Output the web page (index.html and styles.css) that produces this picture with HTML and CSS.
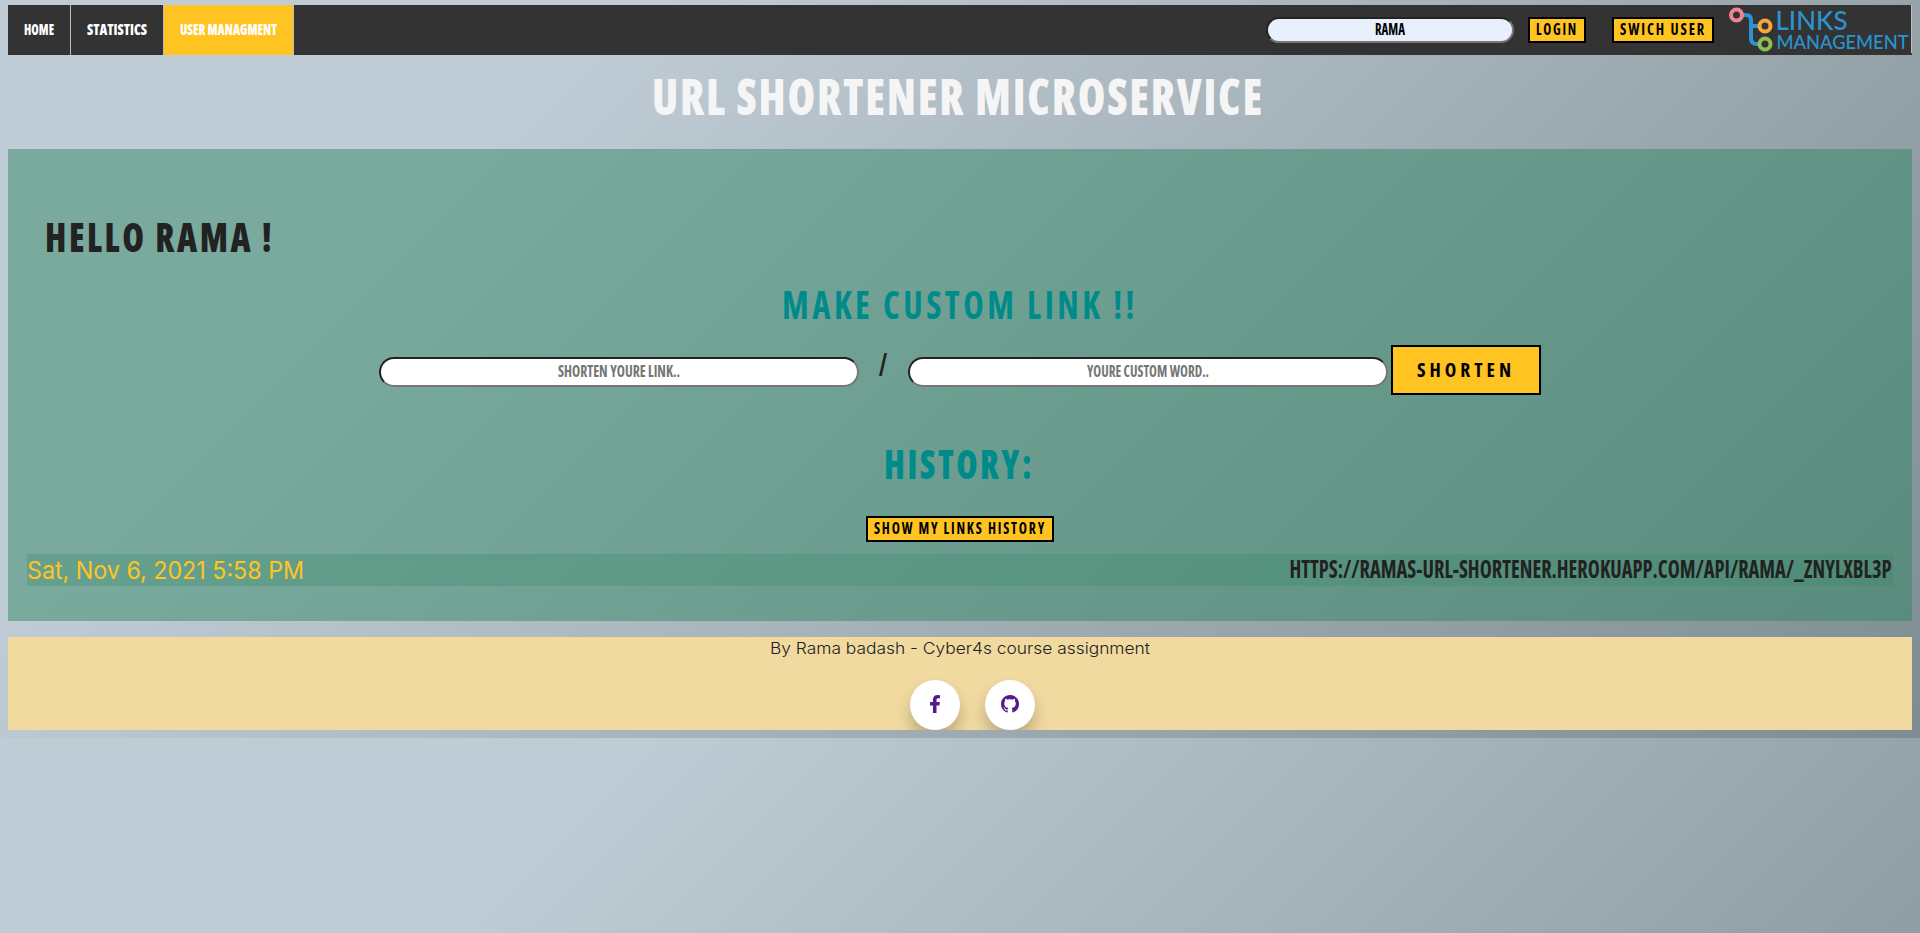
FILE: index.html
```html
<!DOCTYPE html>
<html lang="en">
<head>
<meta charset="utf-8">
<title>URL Shortener Microservice</title>
<link rel="stylesheet" href="styles.css">
</head>
<body>
<nav class="nav">
  <a class="nav-item"><svg class="txt bold" width="30" height="11"><text x="0" y="11" font-size="15.5" textLength="30" lengthAdjust="spacingAndGlyphs">HOME</text></svg></a>
  <a class="nav-item"><svg class="txt bold" width="60" height="11"><text x="0" y="11" font-size="15.5" textLength="60" lengthAdjust="spacingAndGlyphs">STATISTICS</text></svg></a>
  <a class="nav-item active"><svg class="txt bold" width="97" height="11"><text x="0" y="11" font-size="15.5" textLength="97" lengthAdjust="spacingAndGlyphs">USER MANAGMENT</text></svg></a>
  <div class="nav-right">
    <div class="field name"><svg class="txt" width="30" height="11"><text x="0" y="11" font-size="15.5" textLength="30" lengthAdjust="spacingAndGlyphs">RAMA</text></svg></div>
    <button class="btn login"><svg class="txt sp2" width="40" height="11"><text x="-1" y="11" font-size="15.5" textLength="42" lengthAdjust="spacingAndGlyphs">LOGIN</text></svg></button>
    <button class="btn switch"><svg class="txt sp2" width="84" height="11"><text x="-1" y="11" font-size="15.5" textLength="86" lengthAdjust="spacingAndGlyphs">SWICH USER</text></svg></button>
    <svg class="logo" width="183" height="48" viewBox="1728 5 183 48">
      <g fill="none" stroke="#2b93d1" stroke-width="4"><path d="M1743 15h3q5 0 5 5v18q0 6 6 6h2M1751 26h8"/></g>
      <g fill="#333" stroke-width="4"><circle cx="1736.5" cy="15" r="5.5" stroke="#f08590"/><circle cx="1765" cy="26" r="5.5" stroke="#f6a63a"/><circle cx="1765" cy="44" r="5.5" stroke="#8cc152"/></g>
      <text x="1775.5" y="30" font-size="27" textLength="72" lengthAdjust="spacingAndGlyphs">LINKS</text>
      <text x="1776.5" y="48.5" font-size="18.5" textLength="132" lengthAdjust="spacingAndGlyphs">MANAGEMENT</text>
    </svg>
  </div>
</nav>
<h1 class="title"><svg class="txt bold sp2" width="608" height="36"><text x="-2" y="36" font-size="49.8" textLength="612" lengthAdjust="spacingAndGlyphs">URL SHORTENER MICROSERVICE</text></svg></h1>
<main class="panel">
  <h2 class="hello"><svg class="txt bold sp3" width="225" height="29"><text x="-1" y="29.5" font-size="41" textLength="229" lengthAdjust="spacingAndGlyphs">HELLO RAMA !</text></svg></h2>
  <h2 class="make"><svg class="txt sp4" width="350" height="28"><text x="-2" y="28" font-size="39.5" textLength="356" lengthAdjust="spacingAndGlyphs">MAKE CUSTOM LINK !!</text></svg></h2>
  <div class="form">
    <div class="field wide"><svg class="txt" width="122" height="11"><text x="0" y="11" font-size="15.5" textLength="122" lengthAdjust="spacingAndGlyphs">SHORTEN YOURE LINK..</text></svg></div>
    <svg class="txt bold slash" width="8" height="23"><text x="0" y="23" font-size="32" textLength="8" lengthAdjust="spacingAndGlyphs">/</text></svg>
    <div class="field wide"><svg class="txt" width="122" height="11"><text x="0" y="11" font-size="15.5" textLength="122" lengthAdjust="spacingAndGlyphs">YOURE CUSTOM WORD..</text></svg></div>
    <button class="btn shorten"><svg class="txt sp4" width="94" height="14"><text x="-2" y="14" font-size="19.6" textLength="98" lengthAdjust="spacingAndGlyphs">SHORTEN</text></svg></button>
  </div>
  <h2 class="history"><svg class="txt bold sp3" width="145" height="30"><text x="-2" y="29.5" font-size="41" textLength="150" lengthAdjust="spacingAndGlyphs">HISTORY:</text></svg></h2>
  <button class="btn show"><svg class="txt sp2" width="170" height="11"><text x="-1" y="11" font-size="15.5" textLength="172" lengthAdjust="spacingAndGlyphs">SHOW MY LINKS HISTORY</text></svg></button>
  <div class="row">
    <svg class="round date" width="277" height="18"><text x="-1" y="17.5" font-size="24.5" textLength="277" lengthAdjust="spacingAndGlyphs">Sat, Nov 6, 2021 5:58 PM</text></svg>
    <svg class="txt" width="603" height="18"><text x="0.5" y="17" font-size="24" textLength="602" lengthAdjust="spacingAndGlyphs">HTTPS://RAMAS-URL-SHORTENER.HEROKUAPP.COM/API/RAMA/_ZNYLXBL3P</text></svg>
  </div>
</main>
<footer class="footer">
  <svg class="round light" width="379" height="12"><text x="-1" y="12.5" font-size="16" textLength="380" lengthAdjust="spacingAndGlyphs">By Rama badash - Cyber4s course assignment</text></svg>
  <div class="social">
    <a class="disc"><svg width="10" height="18" viewBox="95 0 864 1540" preserveAspectRatio="none"><path d="M959 12v264h-157q-86 0-116 36t-30 108v189h293l-39 296h-254v635h-306v-635h-255v-296h255v-218q0-186 104-288.5t277-102.5q147 0 228 12z"/></svg></a>
    <a class="disc"><svg width="18" height="18" viewBox="0 0 16 16"><path d="M8 0C3.58 0 0 3.58 0 8c0 3.54 2.29 6.53 5.47 7.59.4.07.55-.17.55-.38 0-.19-.01-.82-.01-1.49-2.01.37-2.53-.49-2.69-.94-.09-.23-.48-.94-.82-1.13-.28-.15-.68-.52-.01-.53.63-.01 1.08.58 1.23.82.72 1.21 1.87.87 2.33.66.07-.52.28-.87.51-1.07-1.78-.2-3.64-.89-3.64-3.95 0-.87.31-1.59.82-2.15-.08-.2-.36-1.02.08-2.12 0 0 .67-.21 2.2.82.64-.18 1.32-.27 2-.27.68 0 1.36.09 2 .27 1.53-1.04 2.2-.82 2.2-.82.44 1.1.16 1.92.08 2.12.51.56.82 1.27.82 2.15 0 3.07-1.87 3.75-3.65 3.95.29.25.54.73.54 1.48 0 1.07-.01 1.93-.01 2.2 0 .21.15.46.55.38A8.013 8.013 0 0016 8c0-4.42-3.58-8-8-8z"/></svg></a>
  </div>
</footer>
</body>
</html>
```

FILE: styles.css
```css
* { box-sizing: border-box; }
html { background: linear-gradient(135deg, #c0ccd5 0%, #c0ccd5 24%, #7e8d91 100%); }
body { margin: 5px 8px 8px; color: #222; }
h1, h2 { margin: 0; }
svg { display: block; overflow: visible; flex: none; }

/* Condensed poster lettering */
.txt { font-family: "Open Sans", "Liberation Sans", sans-serif; font-stretch: 75%; font-weight: 700; fill: currentColor; }
.bold { font-weight: 800; }
.sp2 { letter-spacing: 2px; }
.sp3 { letter-spacing: 3px; }
.sp4 { letter-spacing: 4px; }
.round { font-family: Inter, Lato, sans-serif; font-weight: 400; fill: currentColor; }
.light { font-weight: 300; }

.nav { display: flex; height: 50px; background: #333; color: #fff; }
.nav-item { display: flex; align-items: center; padding: 0 16px 1px; border-right: 1px solid #bbb; }
.nav-item.active { background: #ffc422; }
.nav-right { display: flex; align-items: center; margin-left: auto; height: 50px; }
.field { display: flex; align-items: center; justify-content: center; padding-bottom: 1px; background: #fff; border: 2px solid; border-color: #222 #767676 #767676 #222; border-radius: 15px; color: #757575; }
.name { width: 248px; height: 26px; margin-right: 14px; background: #e8f0fe; color: #000; }
.btn { display: flex; align-items: center; justify-content: center; height: 26px; padding: 0 0 1px; border: 2px solid #000; background: #ffc422; color: #000; }
.login { width: 58px; margin-right: 26px; }
.switch { width: 102px; margin-right: 14px; }
.logo { align-self: flex-start; box-sizing: content-box; border-right: 1px solid #bbb; fill: #2b93d1; font-family: Lato, sans-serif; font-weight: 500; }

.title { display: flex; justify-content: center; padding: 24px 4px 34px 0; color: #f5f5f5; }

.panel { display: flex; flex-direction: column; align-items: center; height: 472px; padding: 73px 19px 0; background: rgba(49, 136, 101, .5); }
.hello { align-self: flex-start; margin-left: 19px; }
.make { margin: 40px 3px 0 0; color: #008b8b; }
.form { display: flex; align-items: center; height: 50px; margin-top: 26px; }
.wide { width: 480px; height: 30px; margin-top: 4px; }
.slash { margin: -11px 21px 0 20px; }
.shorten { width: 150px; height: 50px; margin-left: 3px; }
.history { margin: 54px 3px 0 0; color: #008b8b; }
.show { width: 188px; margin-top: 37px; }
.row { display: flex; align-items: center; justify-content: space-between; width: 100%; height: 32px; margin-top: 12px; padding: 0 1px; background: rgba(49, 136, 101, .28); }
.date { color: #ffc422; }

.footer { display: flex; flex-direction: column; align-items: center; height: 93px; margin-top: 16px; padding-top: 4px; background: #f0daa0; }
.social { display: flex; gap: 25px; margin: 27px 0 0 25px; }
.disc { display: flex; align-items: center; justify-content: center; width: 50px; height: 50px; padding-bottom: 2px; border-radius: 50%; background: #fff; fill: #551a8b; box-shadow: 0 10px 15px rgba(0, 0, 0, .22); }
```
